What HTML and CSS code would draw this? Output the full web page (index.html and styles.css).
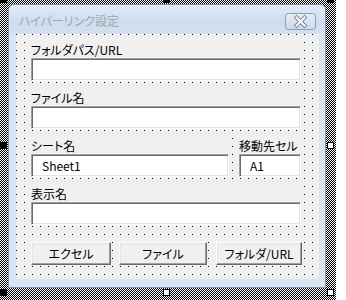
FILE: index.html
```html
<!DOCTYPE html>
<html lang="ja">
<head>
<meta charset="utf-8">
<link rel="stylesheet" href="styles.css">
</head>
<body>
<div class="surface">
  <div class="window">
    <div class="titlebar">
      <span class="title">ハイパーリンク設定</span>
      <div class="close">
        <svg width="31" height="17" viewBox="0 0 31 17">
          <defs>
            <linearGradient id="cg" x1="0" y1="0" x2="0" y2="1">
              <stop offset="0" stop-color="#e6eef7"/>
              <stop offset="1" stop-color="#cbd8e8"/>
            </linearGradient>
          </defs>
          <rect x="0.5" y="0.5" width="30" height="16" rx="3" fill="url(#cg)" stroke="#8c9cb2"/>
          <path d="M11.5 4.5 L19.5 12.5 M19.5 4.5 L11.5 12.5" stroke="#7d8794" stroke-width="4" stroke-linecap="square"/>
          <path d="M11.5 4.5 L19.5 12.5 M19.5 4.5 L11.5 12.5" stroke="#ffffff" stroke-width="2" stroke-linecap="square"/>
        </svg>
      </div>
    </div>
    <div class="client">
      <div class="field">
        <div class="label wide">フォルダパス/URL</div>
        <div class="textbox wide"></div>
      </div>
      <div class="field">
        <div class="label wide">ファイル名</div>
        <div class="textbox wide"></div>
      </div>
      <div class="row">
        <div class="field">
          <div class="label sheet">シート名</div>
          <div class="textbox sheet">Sheet1</div>
        </div>
        <div class="field cellfield">
          <div class="label cell">移動先セル</div>
          <div class="textbox cell">A1</div>
        </div>
      </div>
      <div class="field">
        <div class="label wide">表示名</div>
        <div class="textbox wide"></div>
      </div>
      <div class="buttons">
        <div class="button b1">エクセル</div>
        <div class="button b2">ファイル</div>
        <div class="button b3">フォルダ/URL</div>
      </div>
    </div>
  </div>
  <div class="handle black h-tl"></div>
  <div class="handle black h-tm"></div>
  <div class="handle black h-tr"></div>
  <div class="handle black h-ml"></div>
  <div class="handle black h-bl"></div>
  <div class="handle white h-mr"></div>
  <div class="handle white h-bm"></div>
  <div class="handle white h-br"></div>
</div>
</body>
</html>
```

FILE: styles.css
```css
* { box-sizing: border-box; }
html, body { margin: 0; padding: 0; background: #ffffff; }
body {
  font-family: "Noto Sans CJK JP", "Noto Sans", sans-serif;
  font-size: 12px;
  font-feature-settings: "palt" 1;
  color: #000;
  overflow: hidden;
}
.surface {
  position: relative;
  width: 336px;
  height: 310px;
  padding: 4px 10px 0 8px;
  background-color: #fff;
  background-image: conic-gradient(#000 25%, #fff 0 50%, #000 0 75%, #fff 0);
  background-size: 2px 2px;
}
.window {
  width: 318px;
  height: 284px;
  border: 1px solid #8593a6;
  border-radius: 6px 6px 0 0;
  background: #d7e4f2;
  padding: 0 6px 8px 7px;
  display: flex;
  flex-direction: column;
}
.titlebar {
  height: 29px;
  margin: 0 -6px 0 -7px;
  border-radius: 5px 5px 0 0;
  background: linear-gradient(#e2ebf6, #cddcee 60%, #d3e0f0);
  display: flex;
  align-items: flex-start;
  padding: 8px 9px 0 10px;
}
.title {
  color: #a3a7ad;
  font-size: 12px;
  line-height: 16px;
  flex: 1;
}
.close { height: 17px; margin-top: 0; }
.close svg { display: block; }
.client {
  width: 303px;
  height: 245px;
  background-color: #f0f0f0;
  background-image: conic-gradient(from 270deg at 1px 1px, #000 90deg, transparent 0);
  background-size: 8px 8px;
  background-position: 0 0;
  padding: 8px 0 0 14px;
  display: flex;
  flex-direction: column;
}
.field { display: flex; flex-direction: column; }
.field + .field, .row, .row + .field { margin-top: 9px; }
.row { display: flex; }
.label {
  height: 16px;
  line-height: 16px;
  padding-left: 1px;
  background: #f0f0f0;
  white-space: nowrap;
}
.label.wide { width: 272px; }
.label.sheet { width: 200px; }
.label.cell { width: 64px; }
.cellfield { margin-left: 8px; margin-top: 0 !important; }
.textbox {
  height: 23px;
  margin-left: 1px;
  background: #fff;
  border: 1px solid;
  border-color: #a0a0a0 #ffffff #ffffff #a0a0a0;
  box-shadow: inset 1px 1px #696969, inset -1px -1px #e3e3e3;
  padding-left: 10px;
  line-height: 21px;
  font-family: "Noto Sans CJK JP", sans-serif;
}
.textbox.wide { width: 270px; }
.textbox.sheet { width: 198px; }
.textbox.cell { width: 62px; }
.buttons {
  display: flex;
  margin-top: 17px;
  margin-left: 1px;
}
.button {
  height: 23px;
  background: #f0f0f0;
  border: 1px solid;
  border-color: #ffffff #696969 #696969 #ffffff;
  box-shadow: inset -1px -1px #a0a0a0, inset 1px 1px #e3e3e3;
  text-align: center;
  line-height: 21px;
}
.b1 { width: 80px; }
.b2 { width: 88px; margin-left: 8px; }
.b3 { width: 86px; margin-left: 9px; }
.handle {
  position: absolute;
  width: 7px;
  height: 7px;
}
.handle.black { background: #000; }
.handle.white { background: #fff; border: 1px solid #000; }
.h-tl { left: 0; top: -4px; }
.h-tm { left: 163px; top: -4px; }
.h-tr { left: 327px; top: -4px; }
.h-ml { left: 0; top: 142px; }
.h-bl { left: 0; top: 289px; }
.h-mr { left: 327px; top: 142px; }
.h-bm { left: 163px; top: 289px; }
.h-br { left: 327px; top: 289px; }
```
